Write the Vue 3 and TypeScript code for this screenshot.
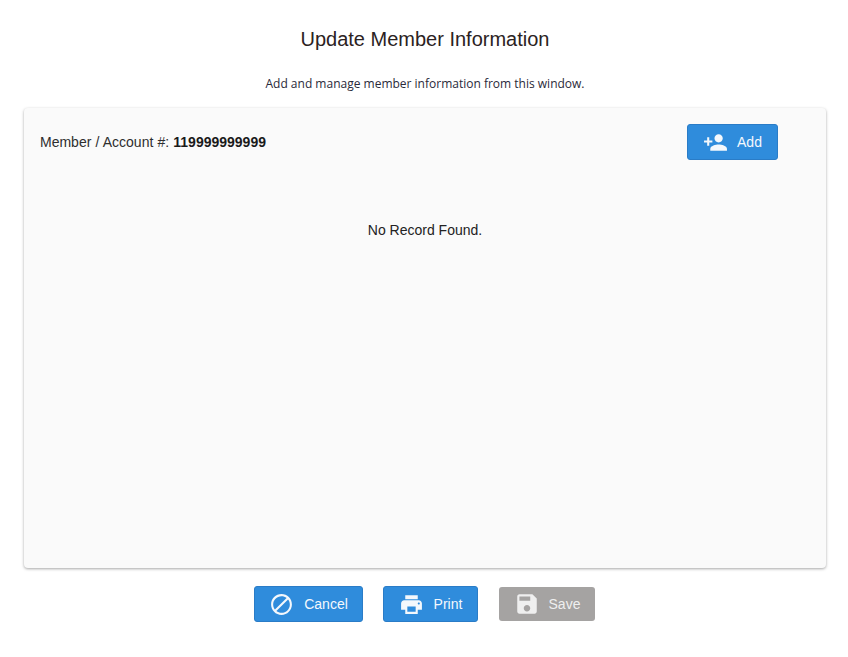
<script setup lang="ts">
const memberNumber = '119999999999'
</script>

<template>
  <div class="dialog">
    <h2 class="title">Update Member Information</h2>
    <p class="subtitle">Add and manage member information from this window.</p>

    <section class="card">
      <div class="card-head">
        <div class="member">Member / Account #: <strong>{{ memberNumber }}</strong></div>
        <button class="btn btn-add" type="button">
          <svg class="icon" width="25" height="25" viewBox="0 0 24 24" fill="currentColor">
            <path d="M15 12c2.21 0 4-1.79 4-4s-1.79-4-4-4-4 1.79-4 4 1.79 4 4 4zm-9-2V7H4v3H1v2h3v3h2v-3h3v-2H6zm9 4c-2.67 0-8 1.34-8 4v2h16v-2c0-2.66-5.33-4-8-4z" />
          </svg>
          <span>Add</span>
        </button>
      </div>
      <p class="empty">No Record Found.</p>
    </section>

    <div class="actions">
      <button class="btn btn-cancel" type="button">
        <svg class="icon" width="25" height="25" viewBox="0 0 24 24" fill="currentColor">
          <path d="M12 2C6.48 2 2 6.48 2 12s4.48 10 10 10 10-4.48 10-10S17.52 2 12 2zM4 12c0-4.42 3.58-8 8-8 1.85 0 3.55.63 4.9 1.69L5.69 16.9C4.63 15.55 4 13.85 4 12zm8 8c-1.85 0-3.55-.63-4.9-1.69L18.31 7.1C19.37 8.45 20 10.15 20 12c0 4.42-3.58 8-8 8z" />
        </svg>
        <span>Cancel</span>
      </button>
      <button class="btn btn-print" type="button">
        <svg class="icon" width="25" height="25" viewBox="0 0 24 24" fill="currentColor">
          <path d="M19 8H5c-1.66 0-3 1.34-3 3v6h4v4h12v-4h4v-6c0-1.66-1.34-3-3-3zm-3 11H8v-5h8v5zm3-7c-.55 0-1-.45-1-1s.45-1 1-1 1 .45 1 1-.45 1-1 1zm-1-9H6v4h12V3z" />
        </svg>
        <span>Print</span>
      </button>
      <button class="btn btn-save" type="button" disabled>
        <svg class="icon" width="26" height="26" viewBox="0 0 24 24" fill="currentColor">
          <path d="M17 3H5c-1.11 0-2 .9-2 2v14c0 1.1.89 2 2 2h14c1.1 0 2-.9 2-2V7l-4-4zm-5 16c-1.66 0-3-1.34-3-3s1.34-3 3-3 3 1.34 3 3-1.34 3-3 3zm3-10H5V5h10v4z" />
        </svg>
        <span>Save</span>
      </button>
    </div>
  </div>
</template>

<style scoped>
.dialog {
  width: 848px;
  height: 657px;
  box-sizing: border-box;
  padding: 27px 22px 0 24px;
  background: #fff;
  font-family: 'Liberation Sans', Arial, sans-serif;
  color: #222;
}

.title {
  margin: 0;
  font-size: 20px;
  font-weight: 400;
  line-height: 24px;
  text-align: center;
  color: #2b2222;
}

.subtitle {
  margin: 24px 0 0;
  font-family: 'Open Sans', sans-serif;
  font-size: 12px;
  line-height: 18px;
  text-align: center;
  color: #2a2a3a;
}

.card {
  height: 460px;
  margin-top: 15px;
  box-sizing: border-box;
  padding: 16px 48px 0 16px;
  background: #fafafa;
  border-radius: 4px;
  box-shadow: 0 1px 3px rgba(0, 0, 0, 0.35);
}

.card-head {
  display: flex;
  align-items: center;
  justify-content: space-between;
}

.member {
  font-size: 14px;
  color: #2e2e2e;
  word-spacing: 0.25px;
}

.member strong {
  color: #1a1a1a;
}

.empty {
  margin: 62px -48px 0 -16px;
  font-size: 14px;
  line-height: 16px;
  text-align: center;
}

.btn {
  display: flex;
  align-items: center;
  justify-content: center;
  box-sizing: border-box;
  height: 36px;
  padding: 0;
  border: 1px solid #2a7cc7;
  border-radius: 3px;
  background: #2f8cdc;
  color: #f4f8fc;
  font-family: 'Liberation Sans', Arial, sans-serif;
  font-size: 14px;
  cursor: pointer;
}

.icon {
  flex: none;
}

.btn-add {
  width: 91px;
  gap: 9px;
}

.actions {
  display: flex;
  justify-content: center;
  align-items: center;
  gap: 20px;
  margin: 18px 1px 0 0;
}

.btn-cancel {
  width: 109px;
  gap: 10px;
}

.btn-print {
  width: 95px;
  gap: 10px;
}

.btn-save {
  width: 96px;
  height: 34px;
  margin-left: 1px;
  gap: 9px;
  border: none;
  background: #a5a3a2;
  color: #efefef;
  cursor: default;
}
</style>
